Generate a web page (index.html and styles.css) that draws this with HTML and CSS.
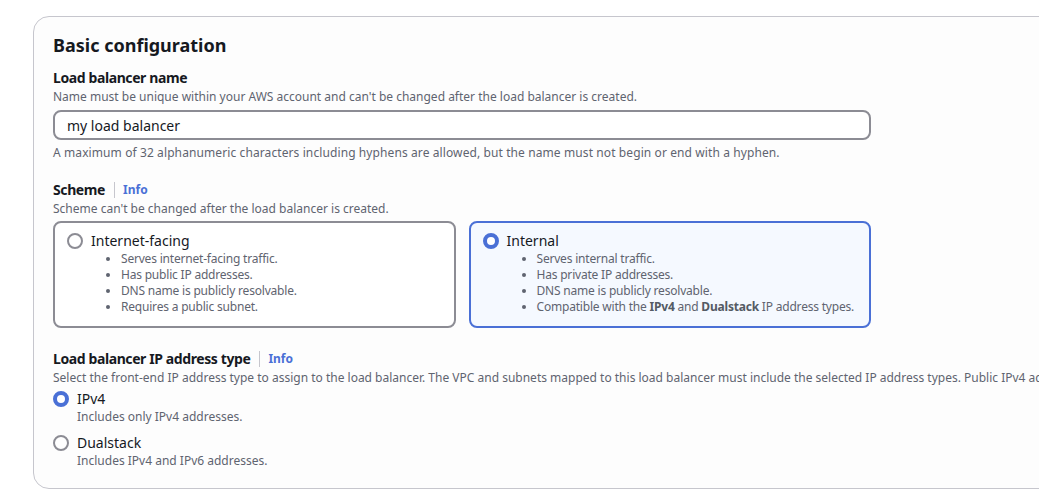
FILE: index.html
```html
<!DOCTYPE html>
<html lang="en">
<head>
    <meta charset="UTF-8">
    <title>Basic configuration</title>
    <link rel="stylesheet" href="styles.css">
</head>
<body>
    <div class="panel">
        <h2 class="panel-title">Basic configuration</h2>

        <div class="field">
            <div class="label">Load balancer name</div>
            <div class="desc">Name must be unique within your AWS account and can't be changed after the load balancer is created.</div>
            <input class="text-input" type="text" value="my load balancer">
            <div class="constraint">A maximum of 32 alphanumeric characters including hyphens are allowed, but the name must not begin or end with a hyphen.</div>
        </div>

        <div class="field">
            <div class="label">Scheme <span class="info">Info</span></div>
            <div class="desc">Scheme can't be changed after the load balancer is created.</div>
            <div class="tiles">
                <div class="tile">
                    <div class="tile-head"><span class="radio"></span>Internet-facing</div>
                    <ul class="tile-list">
                        <li>Serves internet-facing traffic.</li>
                        <li>Has public IP addresses.</li>
                        <li>DNS name is publicly resolvable.</li>
                        <li>Requires a public subnet.</li>
                    </ul>
                </div>
                <div class="tile selected">
                    <div class="tile-head"><span class="radio checked"></span>Internal</div>
                    <ul class="tile-list">
                        <li>Serves internal traffic.</li>
                        <li>Has private IP addresses.</li>
                        <li>DNS name is publicly resolvable.</li>
                        <li>Compatible with the <b>IPv4</b> and <b>Dualstack</b> IP address types.</li>
                    </ul>
                </div>
            </div>
        </div>

        <div class="field">
            <div class="label">Load balancer IP address type <span class="info">Info</span></div>
            <div class="desc nowrap">Select the front-end IP address type to assign to the load balancer. The VPC and subnets mapped to this load balancer must include the selected IP address types. Public IPv4 addresses have an additional cost.</div>
            <div class="option">
                <span class="radio checked"></span>
                <div>
                    <div class="option-label">IPv4</div>
                    <div class="option-desc">Includes only IPv4 addresses.</div>
                </div>
            </div>
            <div class="option">
                <span class="radio"></span>
                <div>
                    <div class="option-label">Dualstack</div>
                    <div class="option-desc">Includes IPv4 and IPv6 addresses.</div>
                </div>
            </div>
        </div>
    </div>
</body>
</html>
```

FILE: styles.css
```css
html, body {
    margin: 0;
    background-color: #fff;
    overflow: hidden;
}
body {
    font-family: "Noto Sans", "Open Sans", sans-serif;
    color: #16191f;
    padding: 16px 0 0 33px;
}
.panel {
    width: 1100px;
    border: 1px solid #c6c6cd;
    border-radius: 16px;
    background-color: #fdfdfd;
    padding: 16px 19px 19px;
    box-sizing: border-box;
}
.panel-title {
    font-size: 18px;
    line-height: 24px;
    font-weight: bold;
    margin: 0 0 11px;
}
.field {
    width: 818px;
    margin-bottom: 19px;
}
.field + .field + .field {
    margin-top: 21px;
}
.field:last-child {
    margin-bottom: 0;
}
.label {
    font-size: 14px;
    line-height: 20px;
    font-weight: bold;
    letter-spacing: -0.4px;
    display: flex;
    align-items: center;
}
.info {
    font-size: 12px;
    font-weight: bold;
    letter-spacing: 0;
    color: #4a70d6;
    margin-left: 9px;
    padding-left: 8px;
    border-left: 1px solid #c6c6cd;
    line-height: 16px;
}
.desc {
    font-size: 12px;
    line-height: 18px;
    color: #5f6470;
}
.nowrap {
    white-space: nowrap;
}
.text-input {
    display: block;
    width: 100%;
    height: 30px;
    box-sizing: border-box;
    margin-top: 4px;
    border: 2px solid #8c8c94;
    border-radius: 8px;
    padding: 0 12px;
    font-family: inherit;
    font-size: 14px;
    color: #16191f;
    background-color: #fff;
    outline: none;
}
.constraint {
    font-size: 12px;
    line-height: 16px;
    color: #5f6470;
    margin-top: 5px;
    letter-spacing: 0.1px;
}
.tiles {
    display: grid;
    grid-template-columns: 1fr 1fr;
    gap: 13px;
    margin-top: 3px;
}
.tile {
    border: 2px solid #8c8c94;
    border-radius: 8px;
    padding: 8px 12px 11px;
    background-color: #fff;
}
.tile.selected {
    border-color: #4a70d6;
    background-color: #f5f9ff;
}
.tile-head {
    display: flex;
    align-items: center;
    font-size: 14px;
    line-height: 20px;
}
.radio {
    width: 16px;
    height: 16px;
    box-sizing: border-box;
    border: 2px solid #8c8c94;
    border-radius: 50%;
    margin-right: 8px;
    flex: none;
    background-color: #fff;
}
.radio.checked {
    border: 4.5px solid #4a70d6;
}
.tile-list {
    margin: 0;
    padding-left: 54px;
    font-size: 12px;
    line-height: 16px;
    letter-spacing: -0.2px;
    white-space: nowrap;
    color: #5f6470;
}
.tile-list b {
    color: #545b64;
}
.option {
    display: flex;
    align-items: flex-start;
    margin-top: 2px;
}
.option + .option {
    margin-top: 8px;
}
.option .radio {
    margin-top: 2px;
}
.option-label {
    font-size: 14px;
    line-height: 20px;
}
.option-desc {
    font-size: 12px;
    line-height: 16px;
    color: #5f6470;
}
```
